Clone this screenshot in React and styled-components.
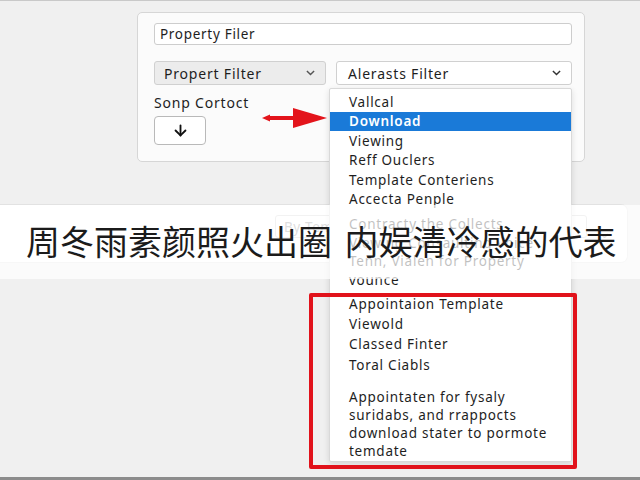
import React from "react";
import styled, { createGlobalStyle } from "styled-components";
import { ArrowDown } from "lucide-react";

const GlobalStyle = createGlobalStyle`
  html, body {
    margin: 0;
    padding: 0;
    background: #f0f0f0;
  }
  * {
    box-sizing: border-box;
  }
`;

const Page = styled.div`
  position: relative;
  width: 640px;
  height: 480px;
  overflow: hidden;
  background: #f0f0f0;
  border-top: 1px solid #c9c9c9;
  border-bottom: 3px solid #8c8c8c;
  font-family: "Noto Sans", "Open Sans", sans-serif;
  color: #222;
`;

const FilterCard = styled.div`
  margin: 11px 0 0 137px;
  width: 448px;
  height: 150px;
  padding: 10px 12px 0 16px;
  background: #fbfbfb;
  border: 1px solid #d6d6d6;
  border-radius: 5px;
`;

const TextInput = styled.div`
  height: 22px;
  padding: 0 5px;
  display: flex;
  align-items: center;
  background: #fff;
  border: 1px solid #cdcdcd;
  border-radius: 3px;
  font-size: 13.5px;
  letter-spacing: 0.7px;
  color: #1e1e1e;
`;

const SelectRow = styled.div`
  margin-top: 16px;
  display: flex;
  gap: 10px;
`;

const Select = styled.div`
  width: ${(p) => p.$width}px;
  height: 24px;
  padding: 0 10px 0 ${(p) => (p.$muted ? 9 : 11)}px;
  display: flex;
  align-items: center;
  justify-content: space-between;
  background: ${(p) => (p.$muted ? "#ececec" : "#fff")};
  border: 1px solid #d0d0d0;
  border-radius: 3px;
  font-size: 14px;
  letter-spacing: 0.8px;
  color: #1e1e1e;
`;

const Label = styled.div`
  margin-top: 9px;
  height: 18px;
  line-height: 18px;
  font-size: 14px;
  letter-spacing: 0.8px;
  color: #1e1e1e;
`;

const IconButton = styled.div`
  margin-top: 4px;
  width: 52px;
  height: 29px;
  display: flex;
  align-items: center;
  justify-content: center;
  background: #fff;
  border: 1px solid #b9b9b9;
  border-radius: 4px;
  color: #111;
`;

const SortCard = styled.div`
  margin-top: 42px;
  width: 628px;
  height: 59px;
  padding: 10px 0 0 275px;
  display: flex;
  align-items: flex-start;
  background: #fff;
  border: 1px solid #e2e2e2;
  border-left: none;
  border-radius: 0 7px 7px 0;
`;

const SortInput = styled.div`
  width: 312px;
  height: 23px;
  padding: 0 8px;
  display: flex;
  align-items: center;
  border: 1px solid #cfcfcf;
  border-radius: 3px;
  font-size: 13.5px;
  letter-spacing: 0.6px;
  color: #8a8a8a;
`;

const SortChevron = styled.div`
  margin: 6px 0 0 13px;
  color: #888;
`;

const Menu = styled.div`
  position: absolute;
  left: 329px;
  top: 87px;
  width: 243px;
  padding: 3px 0 1px;
  background: #fff;
  border: 1px solid #d9d9d9;
  border-radius: 2px;
  box-shadow: 0 2px 6px rgba(0, 0, 0, 0.12);
`;

const MenuGroup = styled.div`
  margin-top: ${(p) => p.$gap || 0}px;
`;

const MenuItem = styled.div`
  height: ${(p) => p.$h || 19.5}px;
  margin-top: ${(p) => p.$top || 0}px;
  padding-left: 19px;
  display: flex;
  align-items: center;
  font-size: 13.5px;
  letter-spacing: 0.75px;
  white-space: nowrap;
  background: ${(p) => (p.$active ? "#1a7ad8" : "transparent")};
  color: ${(p) => (p.$active ? "#fff" : "#1e1e1e")};
  font-weight: ${(p) => (p.$active ? 600 : 400)};
`;

const MenuNote = styled.div`
  margin-top: 13px;
  padding: 0 6px 0 19px;
  font-size: 13.5px;
  line-height: 18px;
  letter-spacing: 0.75px;
  white-space: nowrap;
  color: #1e1e1e;
`;

const Callout = styled.div`
  position: absolute;
  left: 309px;
  top: 292px;
  width: 268px;
  height: 176px;
  border: 4px solid #e1121b;
  border-radius: 2px;
`;

const Pointer = styled.svg`
  position: absolute;
  left: 260px;
  top: 105px;
`;

const Caption = styled.div`
  position: absolute;
  left: 0;
  top: 204px;
  width: 640px;
  height: 74px;
  padding: 0 0 2px 26px;
  display: flex;
  align-items: center;
  background: rgba(255, 255, 255, 0.72);
  font-family: "Noto Sans CJK SC", "Noto Sans", sans-serif;
  font-size: 34px;
  line-height: 1;
  word-spacing: 5px;
  color: #1b1b1b;
  white-space: nowrap;
`;

const Chevron = ({ size = 9, color = "#555" }) => (
  <svg width={size} height={size * 0.6} viewBox="0 0 10 6">
    <path d="M1 1l4 4 4-4" fill="none" stroke={color} strokeWidth="1.6" />
  </svg>
);

const topItems = [
  "Vallcal",
  "Download",
  "Viewing",
  "Reff Ouclers",
  "Template Conteriens",
  "Accecta Penple",
];

const midItems = [
  "Contracty the Collects",
  "Viewing Consaulting Voice",
  "Tenn, Vialen for Property",
  "vounce",
];

const boxedItems = [
  { label: "Appointaion Template", top: 0 },
  { label: "Viewold", top: 0 },
  { label: "Classed Finter", top: 0 },
  { label: "Toral Ciabls", top: 1 },
];

export default function App() {
  return (
    <>
      <GlobalStyle />
      <Page>
        <FilterCard>
          <TextInput>Property Filer</TextInput>
          <SelectRow>
            <Select $width={172} $muted>
              Propert Filter
              <Chevron />
            </Select>
            <Select $width={236}>
              Alerasts Filter
              <Chevron color="#333" />
            </Select>
          </SelectRow>
          <Label>Sonp Cortoct</Label>
          <IconButton>
            <ArrowDown size={17} strokeWidth={2.6} />
          </IconButton>
        </FilterCard>

        <SortCard>
          <SortInput>By Template</SortInput>
          <SortChevron>
            <Chevron color="#999" />
          </SortChevron>
        </SortCard>

        <Menu>
          {topItems.map((item) => (
            <MenuItem key={item} $active={item === "Download"}>
              {item}
            </MenuItem>
          ))}
          <MenuGroup $gap={6}>
            {midItems.map((item) => (
              <MenuItem key={item} $h={18.5}>
                {item}
              </MenuItem>
            ))}
          </MenuGroup>
          <MenuGroup $gap={5}>
            {boxedItems.map((item) => (
              <MenuItem key={item.label} $h={20} $top={item.top}>
                {item.label}
              </MenuItem>
            ))}
          </MenuGroup>
          <MenuNote>
            Appointaten for fysaly
            <br />
            suridabs, and rrappocts
            <br />
            download stater to pormote
            <br />
            temdate
          </MenuNote>
        </Menu>

        <Callout />

        <Pointer width="70" height="24" viewBox="0 0 70 24">
          <polygon points="2,12 10,8.5 10,15.5" fill="#e3141b" />
          <rect x="8" y="10" width="28" height="4" fill="#e3141b" />
          <polygon points="33,2 67,12 33,22" fill="#e3141b" />
        </Pointer>

        <Caption>周冬雨素颜照火出圈 内娱清冷感的代表</Caption>
      </Page>
    </>
  );
}
